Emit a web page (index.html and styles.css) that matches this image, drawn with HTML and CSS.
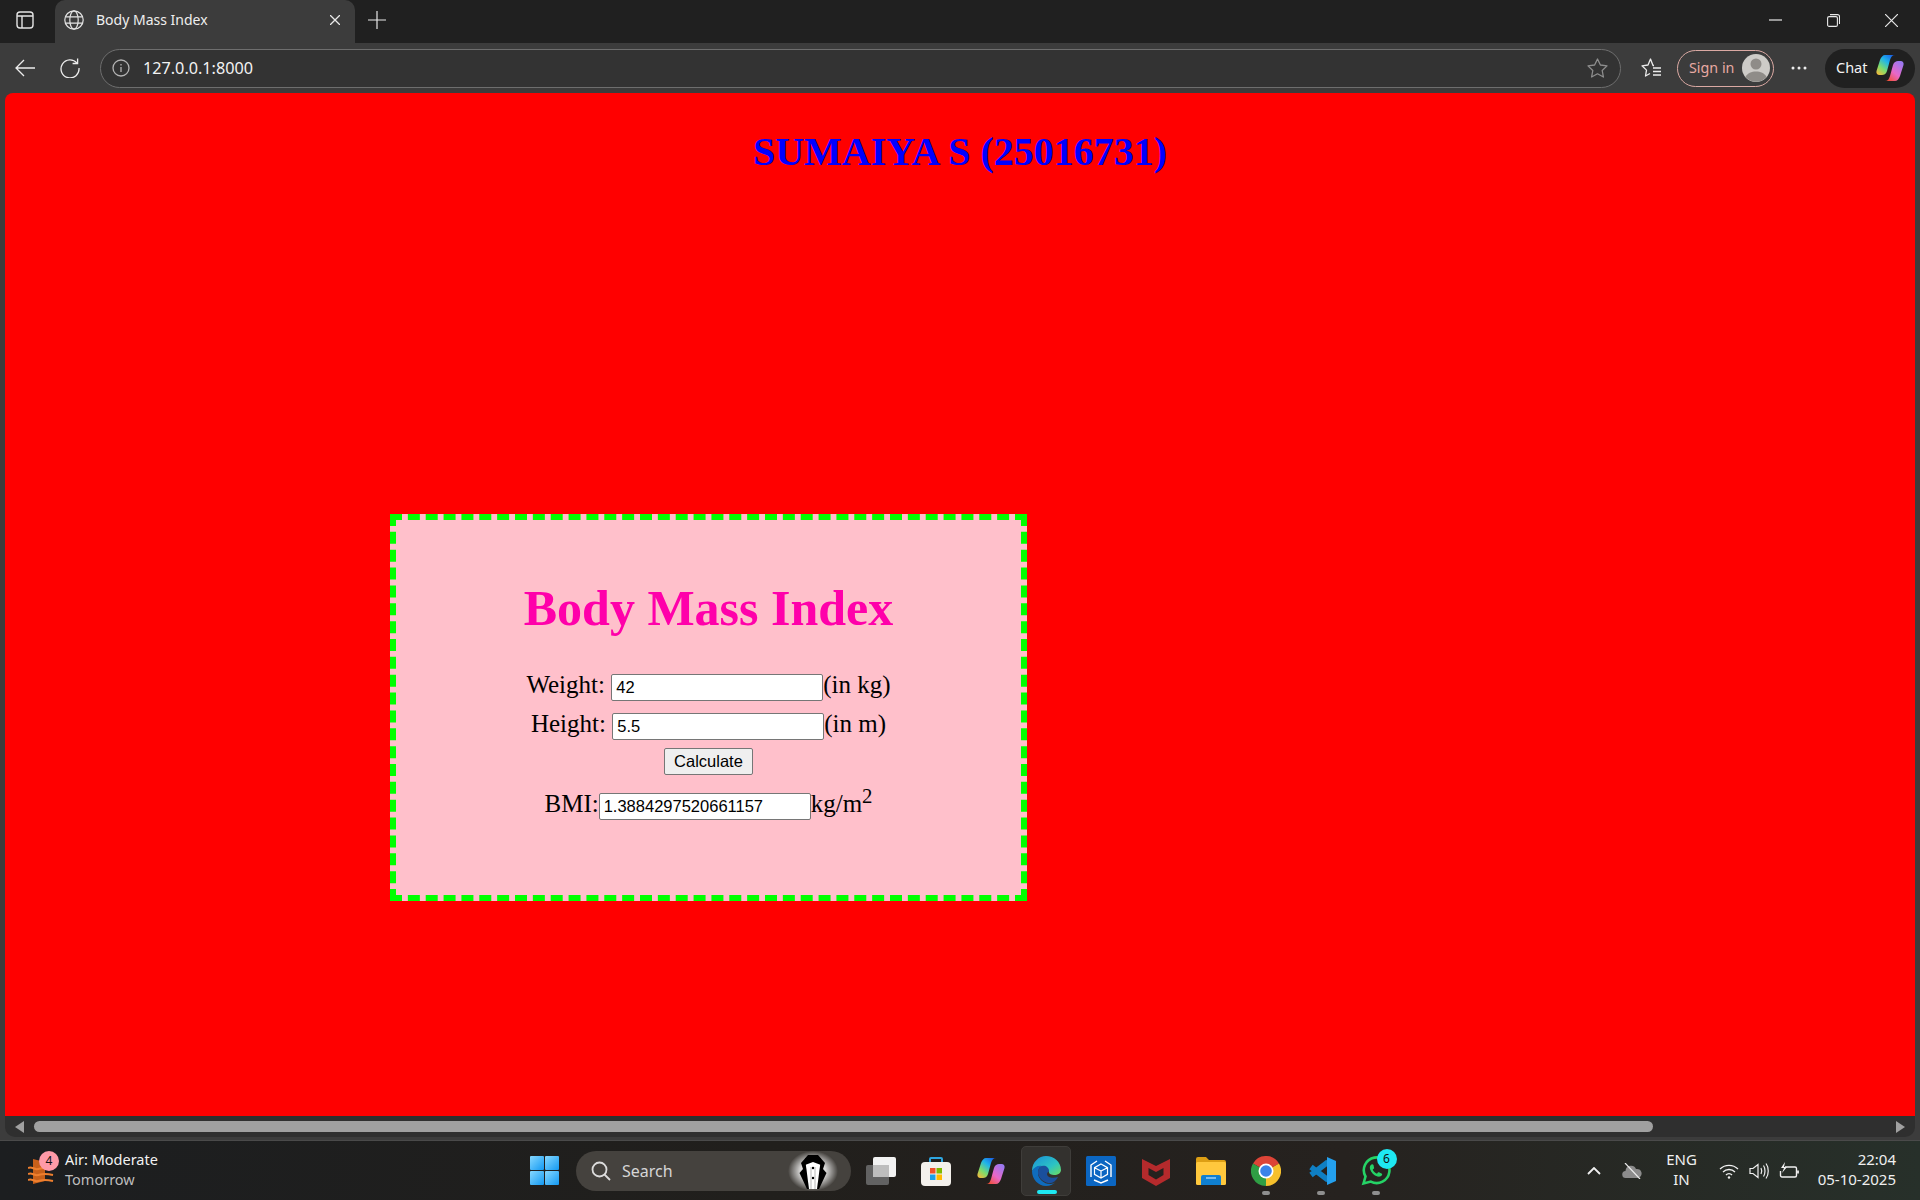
FILE: index.html
```html
<!DOCTYPE html>
<html lang="en">
<head>
    <meta charset="UTF-8">
    <title>Body Mass Index</title>
    <link rel="stylesheet" href="styles.css">
</head>
<body>
    <div class="tabstrip">
        <svg class="sidebarIcon" width="18" height="18" viewBox="0 0 18 18" fill="none" stroke="#e4e4e4" stroke-width="1.4"><rect x="1" y="1" width="16" height="16" rx="3"/><path d="M1 5h16M6 5v12"/></svg>
        <div class="tab">
            <svg width="20" height="20" viewBox="0 0 20 20" fill="none" stroke="#e4e4e4" stroke-width="1.2"><circle cx="10" cy="10" r="9.2"/><ellipse cx="10" cy="10" rx="4.2" ry="9.2"/><path d="M1.6 6.8h16.8M1.6 13.2h16.8"/></svg>
            <span class="tabTitle">Body Mass Index</span>
            <svg width="10" height="10" viewBox="0 0 10 10" stroke="#e8e8e8" stroke-width="1.3"><path d="M0 0l10 10M10 0L0 10"/></svg>
        </div>
        <svg class="newTab" width="18" height="18" viewBox="0 0 18 18" stroke="#e8e8e8" stroke-width="1.2"><path d="M9 0v18M0 9h18"/></svg>
        <div class="windowControls">
            <svg width="13" height="2" viewBox="0 0 13 2" stroke="#e8e8e8" stroke-width="1.2"><path d="M0 1h13"/></svg>
            <svg width="13" height="13" viewBox="0 0 13 13" fill="none" stroke="#e8e8e8" stroke-width="1.1"><rect x=".6" y="2.6" width="9.8" height="9.8" rx="1.5"/><path d="M3 .6h7.5a2 2 0 0 1 2 2V10"/></svg>
            <svg width="13" height="13" viewBox="0 0 13 13" stroke="#e8e8e8" stroke-width="1.2"><path d="M0 0l13 13M13 0L0 13"/></svg>
        </div>
    </div>

    <div class="toolbar">
        <svg class="backIcon" width="20" height="18" viewBox="0 0 20 18" fill="none" stroke="#ececec" stroke-width="1.3"><path d="M20 9H1M9 1L1 9l8 8"/></svg>
        <svg class="reloadIcon" width="20" height="20" viewBox="0 0 20 20" fill="none" stroke="#ececec" stroke-width="1.3"><path d="M17 5.2A9 9 0 1 0 19 10"/><path d="M17.6 .5v5h-5"/></svg>
        <div class="addressBar">
            <svg width="18" height="18" viewBox="0 0 18 18" fill="none" stroke="#b4b4b4" stroke-width="1.3"><circle cx="9" cy="9" r="8"/><path d="M9 8v5M9 5v1.6"/></svg>
            <span class="url">127.0.0.1:8000</span>
            <svg class="starIcon" width="21" height="20" viewBox="0 0 21 20" fill="none" stroke="#8e8e8e" stroke-width="1.3" stroke-linejoin="round"><path d="M10.5 1l2.9 6 6.6.9-4.8 4.6 1.2 6.5-5.9-3.2L4.600 19l1.200-6.500L1 7.900 7.600 7z"/></svg>
        </div>
        <svg class="favIcon" width="21" height="20" viewBox="0 0 21 20" fill="none" stroke="#ececec" stroke-width="1.3" stroke-linejoin="round"><path d="M13 7.500h-1L9.500 1 7 7 1 7.800l4.500 4.300L4.500 18 9 15.500"/><path d="M12 10h8M12 13.500h8M12 17h8"/></svg>
        <div class="signIn">
            <span class="signInText">Sign in</span>
            <svg width="28" height="28" viewBox="0 0 28 28"><circle cx="14" cy="14" r="14" fill="#cdcbc7"/><circle cx="14" cy="10" r="5.500" fill="#8f8c88"/><path d="M3.500 23c2-4 6-5.500 10.500-5.500S22.500 19 24.500 23A14 14 0 0 1 3.500 23z" fill="#8f8c88"/></svg>
        </div>
        <svg class="moreIcon" width="16" height="4" viewBox="0 0 16 4" fill="#ececec"><circle cx="2" cy="2" r="1.500"/><circle cx="8" cy="2" r="1.500"/><circle cx="14" cy="2" r="1.500"/></svg>
        <div class="chatPill">
            <span class="chatText">Chat</span>
            <svg width="28" height="28" viewBox="0 0 28 28">
                <defs>
                    <linearGradient id="copilotA" x1="0.85" y1="0" x2="0.1" y2="1"><stop offset="0" stop-color="#1a5fe8"/><stop offset=".35" stop-color="#1fb4ea"/><stop offset=".7" stop-color="#7fdc6a"/><stop offset="1" stop-color="#f5b83a"/></linearGradient>
                    <linearGradient id="copilotB" x1="0.9" y1="0.1" x2="0.2" y2="1"><stop offset="0" stop-color="#9a78f0"/><stop offset=".55" stop-color="#e868c8"/><stop offset="1" stop-color="#f2503a"/></linearGradient>
                    <linearGradient id="edgeA" x1="0" y1="0" x2="1" y2="1"><stop offset="0" stop-color="#1a8fd8"/><stop offset=".6" stop-color="#2cc3c4"/><stop offset="1" stop-color="#6fdc5c"/></linearGradient>
                    <linearGradient id="winA" x1="0" y1="0" x2="1" y2="1"><stop offset="0" stop-color="#86d8ff"/><stop offset="1" stop-color="#1399f2"/></linearGradient>
                    <radialGradient id="tuxGlow"><stop offset=".5" stop-color="#fff" stop-opacity=".8"/><stop offset="1" stop-color="#fff" stop-opacity="0"/></radialGradient>
                </defs>
                <path d="M9 1h10c-3 0-4 2-5 5l-3 11c-1 3-3 4-5 4H3.500C1 21 0 19 .5 17L4 6c1-3 3-5 5-5z" fill="url(#copilotA)"/>
                <path d="M19 27H9c3 0 4-2 5-5l3-11c1-3 3-4 5-4h2.500c2.500 0 3.500 2 3 4L24 22c-1 3-3 5-5 5z" fill="url(#copilotB)"/>
            </svg>
        </div>
    </div>

    <div class="page">
        <h1 class="studentName">SUMAIYA S (25016731)</h1>
        <div class="bmiBox">
            <h1 class="bmiTitle">Body Mass Index</h1>
            <form class="bmiForm">
                <div class="formRow">Weight: <input class="field" type="text" value="42">(in kg)</div>
                <div class="formRow">Height: <input class="field" type="text" value="5.5">(in m)</div>
                <div class="buttonRow"><button class="calcButton" type="button">Calculate</button></div>
                <div class="formRow">BMI:<input class="field" type="text" value="1.3884297520661157">kg/m<sup>2</sup></div>
            </form>
        </div>
    </div>

    <div class="scrollRow">
        <div class="arrowLeft"></div>
        <div class="scrollTrack"><div class="scrollThumb"></div></div>
        <div class="arrowRight"></div>
    </div>

    <div class="taskbar">
        <div class="weather">
            <div class="weatherIcon">
                <svg width="26" height="30" viewBox="0 0 26 30" fill="none" stroke="#ee7f2e" stroke-width="2"><path d="M5 3l12 3v19L5 28z" fill="#c8601a" stroke="none"/><path d="M0 12c4-2 6 2 10 1s6-2 15 0M0 18c4-2 6 2 10 1s6-2 15 0M0 24c4-2 6 2 10 1s6-2 15 0"/></svg>
                <span class="weatherBadge">4</span>
            </div>
            <div class="weatherText">
                <div class="weatherMain">Air: Moderate</div>
                <div class="weatherSub">Tomorrow</div>
            </div>
        </div>

        <svg class="winLogo" width="29" height="29" viewBox="0 0 29 29" fill="url(#winA)"><rect width="14" height="14" rx="1"/><rect x="15" width="14" height="14" rx="1"/><rect y="15" width="14" height="14" rx="1"/><rect x="15" y="15" width="14" height="14" rx="1"/></svg>

        <div class="searchPill">
            <svg width="20" height="20" viewBox="0 0 20 20" fill="none" stroke="#dcdcdc" stroke-width="1.8"><circle cx="8.500" cy="8.500" r="7"/><path d="M13.500 13.500L19 19"/></svg>
            <span class="searchText">Search</span>
            <svg class="tuxedo" width="50" height="40" viewBox="0 0 50 40">
                <ellipse cx="25" cy="20" rx="25" ry="20" fill="url(#tuxGlow)"/>
                <path d="M20 4l-7 8 2 6-3.500 4L19 38h12l7.500-16-3.500-4 2-6-7-8z" fill="#000"/>
                <path d="M17.500 11h15L29 38h-8z" fill="#fff"/>
                <path d="M23 16v22M27 16v22" stroke="#9a9a9a" stroke-width=".7"/>
                <path d="M17 7l8 3 8-3v7l-8-3-8 3z" fill="#000"/>
                <circle cx="25" cy="17" r="1.200" fill="#000"/><circle cx="25" cy="27" r="1.200" fill="#000"/>
            </svg>
        </div>

        <div class="appIcons">
            <div class="appSlot">
                <svg width="30" height="28" viewBox="0 0 30 28"><rect x="0" y="8" width="23" height="20" rx="2" fill="#626262"/><rect x="7" y="0" width="23" height="20" rx="2" fill="#f2f2f2"/><rect x="7" y="8" width="16" height="12" fill="#bdbdbd"/></svg>
            </div>
            <div class="appSlot">
                <svg width="30" height="30" viewBox="0 0 30 30"><path d="M9 8V3a1 1 0 0 1 1-1h10a1 1 0 0 1 1 1v5" fill="none" stroke="#2ea6e0" stroke-width="2"/><rect y="6" width="30" height="24" rx="4" fill="#f4f1ec"/><rect x="9" y="12" width="5.500" height="5.500" fill="#f0512a"/><rect x="15.500" y="12" width="5.500" height="5.500" fill="#7fba00"/><rect x="9" y="18.500" width="5.500" height="5.500" fill="#1b9fe8"/><rect x="15.500" y="18.500" width="5.500" height="5.500" fill="#ffb900"/></svg>
            </div>
            <div class="appSlot">
                <svg width="28" height="28" viewBox="0 0 28 28"><path d="M9 1h10c-3 0-4 2-5 5l-3 11c-1 3-3 4-5 4H3.500C1 21 0 19 .5 17L4 6c1-3 3-5 5-5z" fill="url(#copilotA)"/><path d="M19 27H9c3 0 4-2 5-5l3-11c1-3 3-4 5-4h2.500c2.500 0 3.500 2 3 4L24 22c-1 3-3 5-5 5z" fill="url(#copilotB)"/></svg>
            </div>
            <div class="appSlot appActive">
                <svg width="30" height="30" viewBox="0 0 30 30"><path d="M1 15C1 6 8 0 15 0c8 0 15 6 15 14 0 3-3 5-7 5-2.500 0-5-1-5-2.500 0-2-1.500-6-6.500-6S3 13 1 15z" fill="url(#edgeA)"/><path d="M1 15c2-4 6-6 10-5-3 1-4 4-4 7 0 6 6 11 12 11 3 0 5-1 7-3-3 3-7 5-11 5C7 30 1 23 1 15z" fill="#0f6cbd"/><path d="M11 10c3-1 7 1 7 5 0 1-2 1-2 3 0 3 5 5 11 3-2 4-6 7-10 6-5-1-10-6-10-10 0-3 1-6 4-7z" fill="#1a4f9c"/></svg>
                <span class="activeBar"></span>
            </div>
            <div class="appSlot">
                <svg width="30" height="30" viewBox="0 0 30 30" fill="none"><rect width="30" height="30" rx="1.500" fill="#0b66c2"/><path d="M15 8l6.500 3.700v6.600L15 22l-6.500-3.700v-6.600zM15 15v7M15 15l6.500-3.300M15 15l-6.500-3.300" stroke="#fff" stroke-width="1.200"/><path d="M11 5L5 9v12M19 5l6 4v12M8 24l7 3 7-3" stroke="#fff" stroke-width="1.400"/></svg>
            </div>
            <div class="appSlot">
                <svg width="28" height="30" viewBox="0 0 28 30"><path fill-rule="evenodd" d="M0 3l14 7 14-7v19l-14 8-14-8zM6.500 12v7l7.500 4.500 7.500-4.500v-7L14 16z" fill="#b52a2c"/></svg>
            </div>
            <div class="appSlot">
                <svg width="30" height="28" viewBox="0 0 30 28"><path d="M0 2a2 2 0 0 1 2-2h8l3 3h15a2 2 0 0 1 2 2v5H0z" fill="#dd9f14"/><rect y="5" width="30" height="23" rx="1.500" fill="#ffc83d"/><path d="M5 28v-8a2 2 0 0 1 2-2h16a2 2 0 0 1 2 2v8z" fill="#0f7fd0"/><path d="M10 21h10" stroke="#bfe3ff" stroke-width="1.200"/></svg>
            </div>
            <div class="appSlot">
                <svg width="30" height="30" viewBox="0 0 30 30"><path d="M2 7.500A15 15 0 0 1 28 7.500L15 15z" fill="#dd4437"/><path d="M28 7.500A15 15 0 0 1 15 30L15 15z" fill="#f6c02c"/><path d="M15 30A15 15 0 0 1 2 7.500L15 15z" fill="#2f9e44"/><circle cx="15" cy="15" r="7.500" fill="#fff"/><circle cx="15" cy="15" r="5.800" fill="#3b82e8"/></svg>
                <span class="runDot"></span>
            </div>
            <div class="appSlot">
                <svg width="30" height="30" viewBox="0 0 30 30" fill="none"><path d="M22 6L5 19M22 24L5 11" stroke="#0f7fc4" stroke-width="5.500"/><path d="M21 1l9 4v20l-9 4z" fill="#24a0ee"/></svg>
                <span class="runDot"></span>
            </div>
            <div class="appSlot">
                <svg width="30" height="30" viewBox="0 0 30 30"><path d="M2.500 27.500l2-7A12.800 12.800 0 1 1 9.800 25.600z" fill="none" stroke="#25d366" stroke-width="2.600"/><path d="M10.500 8.500c-1.500.8-2 2.500-1.500 4.500 1 3.500 4 6.500 7.500 7.500 2 .5 3.700-.2 4.500-1.500.4-.7 0-1.200-.5-1.500l-2.500-1.200c-.6-.2-1-.1-1.300.4l-.7 1c-2-.8-3.500-2.300-4.300-4.300l1-.7c.5-.3.6-.8.300-1.300L12.500 9c-.5-.8-1.300-1-2-.5z" fill="#25d366"/></svg>
                <span class="runDot"></span>
                <span class="whatsBadge">6</span>
            </div>
        </div>

        <div class="tray">
            <svg class="chevron" width="14" height="8" viewBox="0 0 14 8" fill="none" stroke="#f0f0f0" stroke-width="1.800"><path d="M1 7l6-6 6 6"/></svg>
            <svg class="cloudOff" width="20" height="16" viewBox="0 0 20 16"><path d="M4 15a3.500 3.500 0 0 1-.5-7A5.500 5.500 0 0 1 14 6a4.500 4.500 0 0 1 2 9z" fill="#8c8c8c"/><path d="M3 0l15 16" stroke="#ececec" stroke-width="1.200"/></svg>
            <div class="lang"><div>ENG</div><div>IN</div></div>
            <svg class="wifi" width="20" height="16" viewBox="0 0 20 16" fill="none" stroke="#f0f0f0" stroke-width="1.300"><path d="M1 6a13 13 0 0 1 18 0M4 9a8.500 8.500 0 0 1 12 0M7 12a4 4 0 0 1 6 0"/><circle cx="10" cy="14.500" r="1.200" fill="#f0f0f0" stroke="none"/></svg>
            <svg class="volume" width="20" height="18" viewBox="0 0 20 18" fill="none" stroke="#f0f0f0" stroke-width="1.200"><path d="M1 6.500h3L9 2.500v13L4 11.500H1z"/><path d="M12 6c1 2 1 4 0 6M14.500 3.500c2 3 2 8 0 11M17 1.500c3 4 3 11 0 15"/></svg>
            <svg class="battery" width="20" height="18" viewBox="0 0 20 18" fill="none" stroke="#f0f0f0" stroke-width="1.400"><path d="M6 5h10a1.500 1.500 0 0 1 1.500 1.500v7A1.500 1.500 0 0 1 16 15H3a1.500 1.500 0 0 1-1.500-1.500V9"/><path d="M19 8.500v3" stroke-width="1.800"/><path d="M6 0L2 6h3l-2 5 5-6H5z" fill="#f0f0f0" stroke="none"/></svg>
            <div class="clock"><div>22:04</div><div>05-10-2025</div></div>
        </div>
    </div>
</body>
</html>
```

FILE: styles.css
```css
html, body {
    margin: 0;
    padding: 0;
    height: 1200px;
    overflow: hidden;
}

body {
    width: 1920px;
    display: flex;
    flex-direction: column;
    background-color: #3c3c3c;
    font-family: "Noto Sans", "Open Sans", sans-serif;
    color: #eee;
}

svg {
    display: block;
    flex: none;
}

/* browser tabs */
.tabstrip {
    height: 43px;
    box-sizing: border-box;
    padding-bottom: 3px;
    display: flex;
    align-items: center;
    background-color: #202020;
}

.sidebarIcon {
    margin-left: 16px;
    margin-right: 21px;
}

.tab {
    width: 300px;
    height: 43px;
    box-sizing: border-box;
    margin-bottom: -3px;
    padding: 0 15px 3px 9px;
    display: flex;
    align-items: center;
    background-color: #3c3c3c;
    border-radius: 10px 10px 0 0;
}

.tabTitle {
    margin-left: 12px;
    margin-top: -2px;
    flex: 1;
    font-size: 14px;
    color: #eee;
}

.newTab {
    margin-left: 13px;
}

.windowControls {
    margin-left: auto;
    margin-right: 22px;
    display: flex;
    align-items: center;
    gap: 45px;
}

/* address bar row */
.toolbar {
    height: 50px;
    display: flex;
    align-items: center;
    background-color: #3c3c3c;
}

.backIcon {
    margin-left: 15px;
}

.reloadIcon {
    margin-left: 25px;
}

.addressBar {
    width: 1521px;
    height: 39px;
    box-sizing: border-box;
    margin-left: 20px;
    padding: 0 12px 0 11px;
    display: flex;
    align-items: center;
    background-color: #333;
    border: 1px solid #6e6e6e;
    border-radius: 20px;
}

.url {
    margin-left: 13px;
    flex: 1;
    font-size: 16.2px;
    color: #f2f2f2;
}

.favIcon {
    margin-left: 20px;
}

.signIn {
    width: 97px;
    height: 37px;
    box-sizing: border-box;
    margin-left: 15px;
    padding: 0 3px 0 11px;
    display: flex;
    align-items: center;
    justify-content: space-between;
    border: 1px solid #dba9a3;
    border-radius: 19px;
}

.signInText {
    margin-top: -2px;
    font-size: 14.300px;
    color: #e8aaa3;
}

.moreIcon {
    margin-left: 17px;
}

.chatPill {
    width: 90px;
    height: 39px;
    box-sizing: border-box;
    margin-left: 18px;
    padding: 0 11px 0 11px;
    display: flex;
    align-items: center;
    justify-content: space-between;
    background-color: #202020;
    border-radius: 20px;
    font-size: 14.500px;
    color: #f2f2f2;
}

.chatText {
    margin-top: -2px;
}

/* the page itself */
.page {
    height: 1023px;
    flex: none;
    margin: 0 5px;
    overflow: hidden;
    background-color: #ff0000;
    border-radius: 8px 8px 0 0;
    font-family: "Liberation Serif", serif;
    color: #000;
}

.studentName {
    margin: 36px 0 0;
    text-align: center;
    font-size: 40px;
    line-height: 46px;
    color: #0000ff;
}

.bmiBox {
    width: 637px;
    height: 387px;
    box-sizing: border-box;
    margin: 339px 0 0 385px;
    padding-top: 60px;
    background-color: #ffc0cb;
    border: 6px dashed #00ff00;
    text-align: center;
}

.bmiTitle {
    margin: 0;
    font-size: 50px;
    line-height: 56px;
    color: #ff00aa;
}

.bmiForm {
    margin-top: 29px;
}

.formRow {
    height: 39px;
    line-height: 39px;
    font-size: 25px;
}

.field {
    width: 212px;
    height: 27px;
    box-sizing: border-box;
    margin: 0;
    padding: 1px 4px;
    border: 1px solid #767676;
    border-radius: 2px;
    background-color: #fff;
    font-family: "Liberation Sans", Arial, sans-serif;
    font-size: 16.500px;
    color: #000;
}

.formRow sup {
    font-size: 20.800px;
    line-height: 0;
}

.buttonRow {
    height: 41px;
    box-sizing: border-box;
    padding-top: 5px;
}

.calcButton {
    width: 89px;
    height: 27px;
    padding: 0;
    border: 1px solid #767676;
    border-radius: 2px;
    background-color: #efefef;
    font-family: "Liberation Sans", Arial, sans-serif;
    font-size: 16.500px;
    color: #000;
}

/* fake horizontal scrollbar under the page */
.scrollRow {
    height: 21px;
    flex: none;
    margin: 0 5px;
    display: flex;
    align-items: center;
    background-color: #2f2f2f;
    border-radius: 0 0 10px 10px;
}

.arrowLeft {
    width: 0;
    height: 0;
    margin-left: 10px;
    border-top: 6px solid transparent;
    border-bottom: 6px solid transparent;
    border-right: 9px solid #a0a0a0;
}

.arrowRight {
    width: 0;
    height: 0;
    margin-right: 10px;
    border-top: 6px solid transparent;
    border-bottom: 6px solid transparent;
    border-left: 9px solid #a0a0a0;
}

.scrollTrack {
    flex: 1;
    padding: 0 10px;
}

.scrollThumb {
    width: 1619px;
    height: 11px;
    background-color: #a0a0a0;
    border-radius: 6px;
}

/* windows taskbar */
.taskbar {
    height: 59px;
    flex: none;
    margin-top: 4px;
    display: flex;
    align-items: center;
    background: linear-gradient(90deg, #1c1e20, #211f1c 40%, #26221f 70%, #27302a);
    box-shadow: 0 -1px 0 #4a4a4a;
}

.weather {
    margin-left: 28px;
    display: flex;
    align-items: center;
    flex: none;
    width: 502px;
}

.weatherIcon {
    position: relative;
    width: 26px;
    height: 30px;
}

.weatherBadge {
    position: absolute;
    top: -5px;
    left: 11px;
    width: 20px;
    height: 20px;
    border-radius: 50%;
    background-color: #ff9aa8;
    color: #111;
    font-size: 12px;
    line-height: 20px;
    text-align: center;
}

.weatherText {
    margin-left: 11px;
    margin-top: -3px;
    font-size: 14.500px;
    line-height: 20px;
}

.weatherMain {
    color: #f2f2f2;
}

.weatherSub {
    color: #bdbdbd;
}

.searchPill {
    width: 275px;
    height: 40px;
    box-sizing: border-box;
    margin-left: 17px;
    padding-left: 15px;
    display: flex;
    align-items: center;
    flex: none;
    background-color: #45423e;
    border-radius: 20px;
}

.searchText {
    margin-left: 11px;
    flex: 1;
    font-size: 16px;
    color: #d6d6d6;
}

.tuxedo {
    margin-right: 13px;
}

.appIcons {
    margin-left: 4.500px;
    display: flex;
    align-items: center;
}

.appSlot {
    position: relative;
    width: 50px;
    height: 50px;
    margin-right: 5px;
    display: flex;
    align-items: center;
    justify-content: center;
}

.appActive {
    background-color: #33312e;
    border: 1px solid #3f3d3a;
    border-radius: 5px;
    box-sizing: border-box;
}

.activeBar {
    position: absolute;
    left: 15px;
    bottom: 1px;
    width: 20px;
    height: 4px;
    border-radius: 2px;
    background-color: #1ee8f2;
}

.runDot {
    position: absolute;
    left: 18px;
    bottom: 1px;
    width: 8px;
    height: 4px;
    margin-left: 3px;
    border-radius: 2px;
    background-color: #8f8f8f;
}

.whatsBadge {
    position: absolute;
    top: 3px;
    left: 26px;
    width: 20px;
    height: 20px;
    border-radius: 50%;
    background-color: #1ee8f2;
    color: #111;
    font-size: 12px;
    line-height: 20px;
    text-align: center;
}

.tray {
    flex: 1;
    display: flex;
    align-items: center;
    font-size: 15px;
    line-height: 20px;
    color: #f0f0f0;
}

.chevron {
    margin-left: 181px;
}

.cloudOff {
    margin-left: 21px;
}

.lang {
    width: 40px;
    margin-left: 20px;
    margin-top: -3px;
    text-align: center;
}

.wifi {
    margin-left: 17px;
}

.volume {
    margin-left: 10px;
}

.battery {
    margin-left: 10px;
}

.clock {
    margin-left: auto;
    margin-right: 24px;
    margin-top: -3px;
    text-align: right;
}
```
